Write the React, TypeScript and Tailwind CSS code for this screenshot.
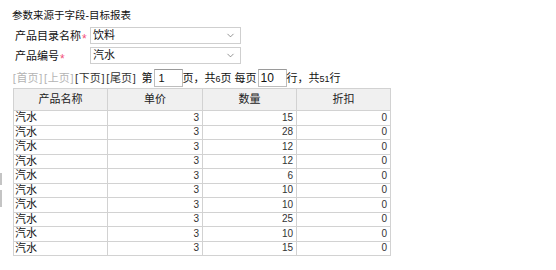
import React from "react";
import { ChevronDown } from "lucide-react";

const rows = [
  { name: "汽水", price: 3, qty: 15, discount: 0 },
  { name: "汽水", price: 3, qty: 28, discount: 0 },
  { name: "汽水", price: 3, qty: 12, discount: 0 },
  { name: "汽水", price: 3, qty: 12, discount: 0 },
  { name: "汽水", price: 3, qty: 6, discount: 0 },
  { name: "汽水", price: 3, qty: 10, discount: 0 },
  { name: "汽水", price: 3, qty: 10, discount: 0 },
  { name: "汽水", price: 3, qty: 25, discount: 0 },
  { name: "汽水", price: 3, qty: 10, discount: 0 },
  { name: "汽水", price: 3, qty: 15, discount: 0 },
];

const FormRow = ({ label, value }: { label: string; value: string }) => (
  <div className="flex h-[17px] items-center">
    <div className="w-[78px] pl-[3px] text-[11px] leading-none text-[#111]">
      {label}
      <span className="relative top-[3px] ml-[1px] text-[12px] text-[#f2507a]">*</span>
    </div>
    <div className="flex h-[17px] w-[151px] items-center justify-between border border-[#cfcfcf] bg-white pl-[2px] pr-[4px]">
      <span className="text-[11px] leading-none text-[#111]">{value}</span>
      <ChevronDown size={11} strokeWidth={1.5} className="text-[#666]" />
    </div>
  </div>
);

const PageLink = ({ text, disabled }: { text: string; disabled?: boolean }) => (
  <span className={disabled ? "text-[#b4b4b4]" : "text-[#333]"}>
    <span className="px-[0.75px]">[</span>
    {text}
    <span className="px-[0.75px]">]</span>
  </span>
);

export default function App() {
  return (
    <div
      className="relative h-[270px] w-[556px] overflow-hidden bg-white pl-[12px] pt-[8px] text-[#111]"
      style={{ fontFamily: '"Liberation Sans", "Noto Sans CJK SC", sans-serif' }}
    >
      {/* splitter handle */}
      <div className="absolute left-0 top-[173px] h-[12px] w-[2px] bg-[#c4c4c4]" />
      <div className="absolute left-0 top-[190px] h-[17px] w-[2px] bg-[#c4c4c4]" />

      <div className="h-[14px] text-[10.5px] leading-[14px]">参数来源于字段-目标报表</div>

      <div className="mt-[5px] flex flex-col gap-[3px]">
        <FormRow label="产品目录名称" value="饮料" />
        <FormRow label="产品编号" value="汽水" />
      </div>

      {/* pager */}
      <div className="mt-[5px] flex h-[18px] items-center text-[11px] leading-none">
        <PageLink text="首页" disabled />
        <PageLink text="上页" disabled />
        <PageLink text="下页" />
        <PageLink text="尾页" />
        <span className="ml-[5px]">第</span>
        <div className="ml-[1px] flex h-[18px] w-[29px] items-center border border-[#bdbdbd] border-t-[#9a9a9a] pl-[4px] text-[11px]">
          1
        </div>
        <span>
          页，共<span className="text-[9px]">6</span>页 每页
        </span>
        <div className="ml-[1px] flex h-[18px] w-[29px] items-center border border-[#bdbdbd] border-t-[#9a9a9a] pl-[2px] text-[12px]">
          10
        </div>
        <span>
          行，共<span className="text-[9px]">51</span>行
        </span>
      </div>

      {/* table */}
      <table className="ml-[1px] mt-[1px] w-[377px] table-fixed border-collapse text-[11px] leading-none">
        <colgroup>
          <col className="w-[94px]" />
          <col className="w-[95px]" />
          <col className="w-[94px]" />
          <col className="w-[94px]" />
        </colgroup>
        <thead>
          <tr className="h-[22px] bg-[#f0f0f0]">
            {["产品名称", "单价", "数量", "折扣"].map((h) => (
              <th key={h} className="border border-[#d2d2d2] p-0 text-center font-normal text-[#222]">
                {h}
              </th>
            ))}
          </tr>
        </thead>
        <tbody>
          {rows.map((r, i) => (
            <tr key={i} className="h-[14.5px]">
              <td className="border border-[#d2d2d2] p-0 pl-[1px] text-left">{r.name}</td>
              <td className="border border-[#d2d2d2] p-0 pr-[3px] text-right text-[10px] text-[#333]">{r.price}</td>
              <td className="border border-[#d2d2d2] p-0 pr-[3px] text-right text-[10px] text-[#333]">{r.qty}</td>
              <td className="border border-[#d2d2d2] p-0 pr-[3px] text-right text-[10px] text-[#333]">{r.discount}</td>
            </tr>
          ))}
        </tbody>
      </table>
    </div>
  );
}
